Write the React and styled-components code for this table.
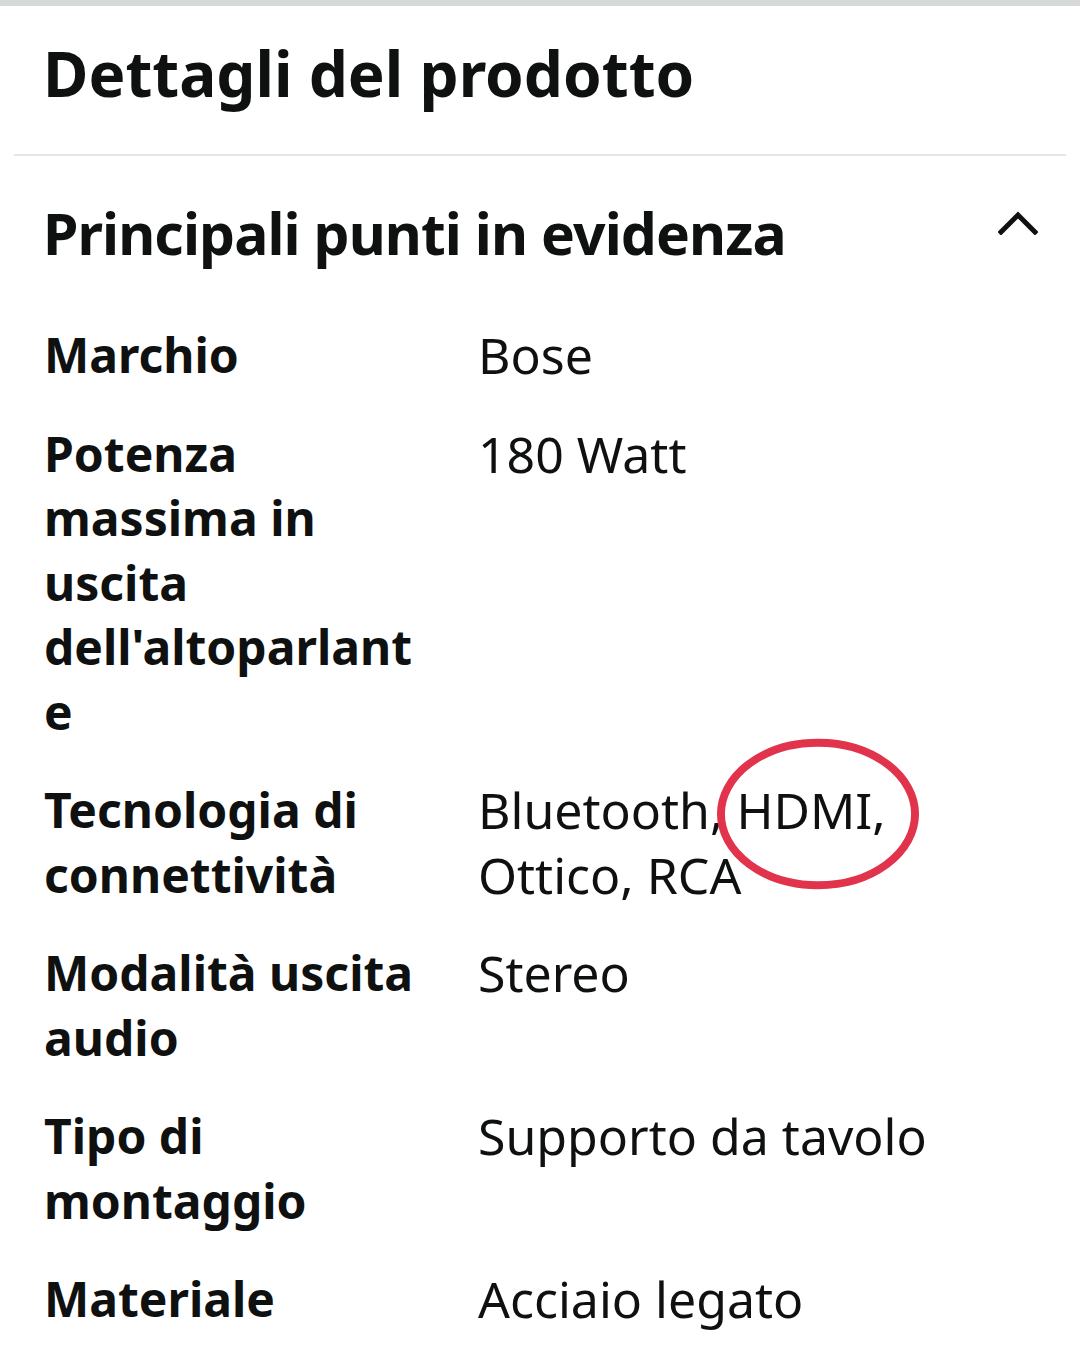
import React from "react";
import styled, { createGlobalStyle } from "styled-components";

const GlobalStyle = createGlobalStyle`
  html, body {
    margin: 0;
    padding: 0;
    background: #ffffff;
  }
  body {
    font-family: "Noto Sans", "Open Sans", Arial, sans-serif;
    color: #0f1111;
  }
`;

const rows = [
  { label: "Marchio", value: "Bose" },
  { label: "Potenza massima in uscita dell'altoparlante", value: "180 Watt" },
  { label: "Tecnologia di connettività", value: "hdmi" },
  { label: "Modalità uscita audio", value: "Stereo" },
  { label: "Tipo di montaggio", value: "Supporto da tavolo" },
  { label: "Materiale", value: "Acciaio legato" },
];

const App = () => {
  return (
    <Page>
      <GlobalStyle />
      <TopBar />
      <Title>Dettagli del prodotto</Title>
      <Divider />
      <SectionHeader>
        <SectionTitle>Principali punti in evidenza</SectionTitle>
        <Chevron viewBox="0 0 40 24" aria-hidden="true">
          <path d="M3 21 L20 4 L37 21" />
        </Chevron>
      </SectionHeader>
      <SpecTable>
        {rows.map((row) => (
          <React.Fragment key={row.label}>
            <Label>{row.label}</Label>
            <Value>
              {row.value === "hdmi" ? (
                <>
                  Bluetooth, <Marked>HDMI,<Circle viewBox="0 0 206 152">
                    <ellipse cx="103" cy="76" rx="98" ry="72" />
                  </Circle></Marked> Ottico, RCA
                </>
              ) : (
                row.value
              )}
            </Value>
          </React.Fragment>
        ))}
      </SpecTable>
    </Page>
  );
};

export default App;

const Page = styled.div`
  width: 1080px;
  min-height: 1366px;
  overflow: hidden;
  background: #fff;
`;

const TopBar = styled.div`
  height: 6px;
  background: #d5d9d9;
`;

const Title = styled.h1`
  margin: 0;
  padding: 27px 43px 0;
  height: 114px;
  box-sizing: border-box;
  font-size: 62px;
  font-weight: 700;
  line-height: 80px;
`;

const Divider = styled.hr`
  margin: 34px 14px 0;
  border: 0;
  height: 2px;
  background: #e3e6e6;
`;

const SectionHeader = styled.div`
  display: flex;
  justify-content: space-between;
  align-items: center;
  padding: 37px 42px 0 43px;
`;

const SectionTitle = styled.h2`
  margin: 0;
  font-size: 57px;
  font-weight: 700;
  letter-spacing: -0.9px;
  line-height: 80px;
`;

const Chevron = styled.svg`
  width: 40px;
  height: 24px;
  margin-top: -20px;
  fill: none;
  stroke: #0f1111;
  stroke-width: 5;
  stroke-linecap: square;
`;

const SpecTable = styled.div`
  display: grid;
  grid-template-columns: 394px 1fr;
  column-gap: 40px;
  row-gap: 34px;
  padding: 50px 100px 0 44px;
`;

const Label = styled.div`
  font-size: 48px;
  font-weight: 700;
  line-height: 64.5px;
  overflow-wrap: anywhere;
`;

const Value = styled.div`
  font-size: 50px;
  font-weight: 400;
  line-height: 64.5px;
`;

const Marked = styled.span`
  position: relative;
  display: inline-block;
`;

const Circle = styled.svg`
  position: absolute;
  left: -20px;
  top: -40px;
  width: 204px;
  height: 152px;
  fill: none;
  stroke: #e1334c;
  stroke-width: 8;
  pointer-events: none;
`;
